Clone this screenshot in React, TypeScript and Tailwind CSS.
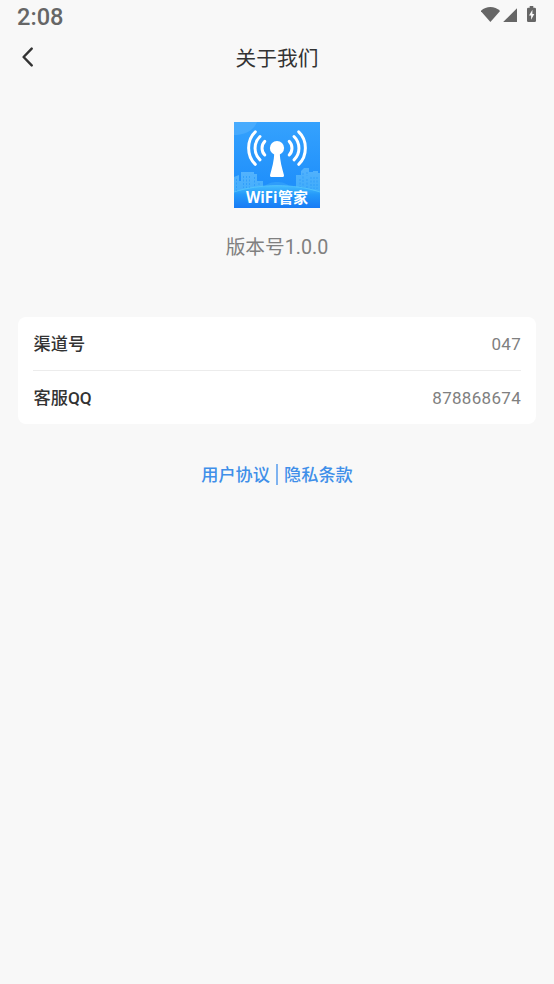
const INFO_ROWS = [
  { label: "渠道号", value: "047" },
  { label: "客服QQ", value: "878868674" },
]

function StatusBar() {
  return (
    <div className="flex h-8 items-start justify-between pl-[17px] pr-[18px] text-[#666666]">
      <span className="pt-[3px] text-[23.6px] leading-7 font-medium">2:08</span>
      <div className="flex h-8 items-start">
        <svg className="h-8 w-[55px]" viewBox="0 0 55 32" fill="currentColor">
          <path d="M-0.3 11C5.1 5.8 13.7 5.8 19.1 11L9.4 22Z" />
          <path d="M36 8.2V22H22.2Z" />
          <path d="M48.7 6h3.6v1.7h1.4q1.3 0 1.3 1.3v11.7q0 1.3-1.3 1.3h-6.4q-1.3 0-1.3-1.3V9q0-1.3 1.3-1.3h1.4Z" />
          <path d="M51.4 9.8L48 15.5h2.1v4.2l3.2-5.8h-1.9Z" fill="#f8f8f8" />
        </svg>
      </div>
    </div>
  )
}

function AppLogo() {
  return (
    <svg className="size-[86px]" viewBox="0 0 86 86">
      <defs>
        <linearGradient id="sky" x1="0" y1="0" x2="0" y2="1">
          <stop offset="0" stopColor="#35a2fe" />
          <stop offset="0.7" stopColor="#2090fb" />
          <stop offset="1" stopColor="#2196fc" />
        </linearGradient>
        <linearGradient id="city" x1="0" y1="0" x2="0" y2="1">
          <stop offset="0" stopColor="#5cb8fd" />
          <stop offset="1" stopColor="#45b2fc" />
        </linearGradient>
        <linearGradient id="ground" x1="0" y1="0" x2="0" y2="1">
          <stop offset="0" stopColor="#45bcfd" />
          <stop offset="0.4" stopColor="#2499fa" />
          <stop offset="1" stopColor="#187bf5" />
        </linearGradient>
      </defs>
      <rect width="86" height="86" fill="url(#sky)" />
      <path d="M0 0H23C20 8 11 13 0 13Z" fill="#5bb5fd" opacity="0.5" />
      <g fill="url(#city)" opacity="0.85">
        <path d="M0 55l5-2v6h2v-9h13v2h3v7h6v8L0 75Z" />
        <path d="M62 66V53h5v-4l3-3h5v4h4v-1h5v2h2v19Z" />
      </g>
      <path d="M29 65c5-4 9-5 14-5s9 1 14 5Z" fill="#3caafc" opacity="0.5" />
      <path
        d="M2.5 57v12M9.5 54v12M12.5 54v12M15.5 54v12M20.5 55v9M25 61v4M66 57v9M69 51v16M73 50v4M73 57v9M77 55v12M80 55v12M83 55v12"
        stroke="#2597fb"
        strokeWidth="1"
        strokeDasharray="2 1.5"
        fill="none"
        opacity="0.65"
      />
      <path d="M0 70C26 61.5 60 61.5 86 70V86H0Z" fill="url(#ground)" />
      <path d="M0 70C26 61.5 60 61.5 86 70" fill="none" stroke="#56c7fd" strokeWidth="0.8" />
      <g fill="none" stroke="#ffffff" strokeWidth="3" strokeLinecap="round">
        <path d="M21.3 9.8C12.4 18 12.4 34 21.3 42.3" />
        <path d="M26 14.5C19.4 21 19.4 31.5 26 37.8" />
        <path d="M30.8 19.4C27.1 23 27.1 29.2 30.8 33" />
        <path d="M64.7 9.8C73.6 18 73.6 34 64.7 42.3" />
        <path d="M60 14.5C66.6 21 66.6 31.5 60 37.8" />
        <path d="M55.2 19.4C58.9 23 58.9 29.2 55.2 33" />
      </g>
      <circle cx="43" cy="26" r="7.1" fill="#ffffff" />
      <path d="M40.3 31h5.4C46 39 48 46 50 53.2q.3 1.8-1.2 1.8H37.2q-1.5 0-1.2-1.8C38 46 40 39 40.3 31Z" fill="#ffffff" />
      <text x="12" y="81" className="fill-white text-[15px] font-bold">
        <tspan
          textLength="31.5"
          lengthAdjust="spacingAndGlyphs"
          className="font-['Open_Sans',sans-serif] text-[15.5px]"
        >
          WiFi
        </tspan>
        <tspan x="44" className="font-['Noto_Sans_CJK_SC',sans-serif]">管家</tspan>
      </text>
    </svg>
  )
}

export default function App() {
  return (
    <div className="flex min-h-screen flex-col bg-[#f8f8f8] font-[Roboto,'Noto_Sans_CJK_SC',sans-serif]">
      <StatusBar />

      <header className="grid h-[50px] grid-cols-[60px_1fr_60px] items-center">
        <button className="pl-[21px]" aria-label="返回">
          <svg className="h-5 w-[14px]" viewBox="0 0 14 20" fill="none" stroke="#333333" strokeWidth="2.4">
            <path d="M10.7 1.6L2.6 10l8.1 8.4" strokeLinecap="round" strokeLinejoin="round" />
          </svg>
        </button>
        <h1 className="pt-[3px] text-center text-[20.7px] leading-[30px] text-[#333333]">关于我们</h1>
      </header>

      <section className="flex flex-col items-center pt-10">
        <AppLogo />
        <p className="mt-[25px] text-[19.7px] leading-[30px] text-[#808080]">版本号1.0.0</p>
      </section>

      <section className="mx-[18px] mt-[54px] rounded-lg bg-white px-[15px]">
        {INFO_ROWS.map((row, i) => (
          <div
            key={row.label}
            className={
              i > 0
                ? "flex h-[54px] items-center justify-between border-t border-[#ececec] pt-[2px]"
                : "flex h-[53px] items-center justify-between pt-[2px]"
            }
          >
            <span className="pl-[0.5px] text-[17.2px] font-medium text-[#333333]">{row.label}</span>
            <span className="text-[17px] tracking-[0.3px] text-[#808080]">{row.value}</span>
          </div>
        ))}
      </section>

      <footer className="mt-[38px] flex items-center justify-center text-[17.2px] leading-[26px] font-medium text-[#3f8fe9]">
        <a>用户协议</a>
        <span className="mx-[6px] mb-[2px] h-[21px] w-[2px] bg-[#7fb3f0]" />
        <a>隐私条款</a>
      </footer>
    </div>
  )
}
